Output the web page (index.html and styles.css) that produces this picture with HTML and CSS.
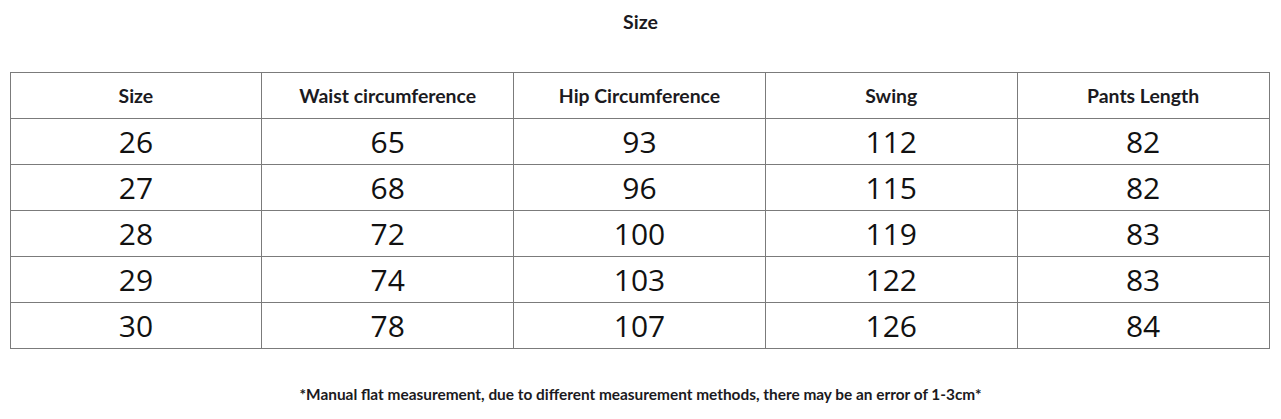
FILE: index.html
```html
<!DOCTYPE html>
<html lang="en">
<head>
<meta charset="utf-8">
<title>Size</title>
<link rel="stylesheet" href="styles.css">
</head>
<body>
<div class="page">
  <h1 class="title">Size</h1>
  <table class="size-table">
    <thead>
      <tr>
        <th>Size</th>
        <th>Waist circumference</th>
        <th>Hip Circumference</th>
        <th>Swing</th>
        <th>Pants Length</th>
      </tr>
    </thead>
    <tbody>
      <tr><td>26</td><td>65</td><td>93</td><td>112</td><td>82</td></tr>
      <tr><td>27</td><td>68</td><td>96</td><td>115</td><td>82</td></tr>
      <tr><td>28</td><td>72</td><td>100</td><td>119</td><td>83</td></tr>
      <tr><td>29</td><td>74</td><td>103</td><td>122</td><td>83</td></tr>
      <tr><td>30</td><td>78</td><td>107</td><td>126</td><td>84</td></tr>
    </tbody>
  </table>
  <p class="note">*Manual flat measurement, due to different measurement methods, there may be an error of 1-3cm*</p>
</div>
</body>
</html>
```
FILE: styles.css
```css
html, body {
  margin: 0;
  padding: 0;
  background: #ffffff;
}

.page {
  width: 1281px;
  height: 419px;
  display: flex;
  flex-direction: column;
  align-items: center;
  color: #1b1a21;
  font-family: Lato, "Liberation Sans", sans-serif;
}

.title {
  margin: 0;
  height: 72px;
  padding-top: 10px;
  box-sizing: border-box;
  font-size: 19.5px;
  line-height: 24px;
  font-weight: 700;
}

.size-table {
  border-collapse: collapse;
  table-layout: fixed;
  width: 1260px;
  margin-left: -2px;
}

.size-table th,
.size-table td {
  border: 1px solid #7b7b7b;
  text-align: center;
  padding: 0;
  width: 20%;
}

.size-table th {
  height: 45px;
  font-size: 19.4px;
  font-weight: 700;
}

.size-table td {
  height: 45px;
  font-family: "Open Sans", Lato, sans-serif;
  font-size: 30px;
  line-height: 40px;
  font-weight: 400;
  color: #111111;
}

.note {
  margin: 35px 0 0;
  font-size: 15.4px;
  line-height: 20px;
  font-weight: 700;
}
```
